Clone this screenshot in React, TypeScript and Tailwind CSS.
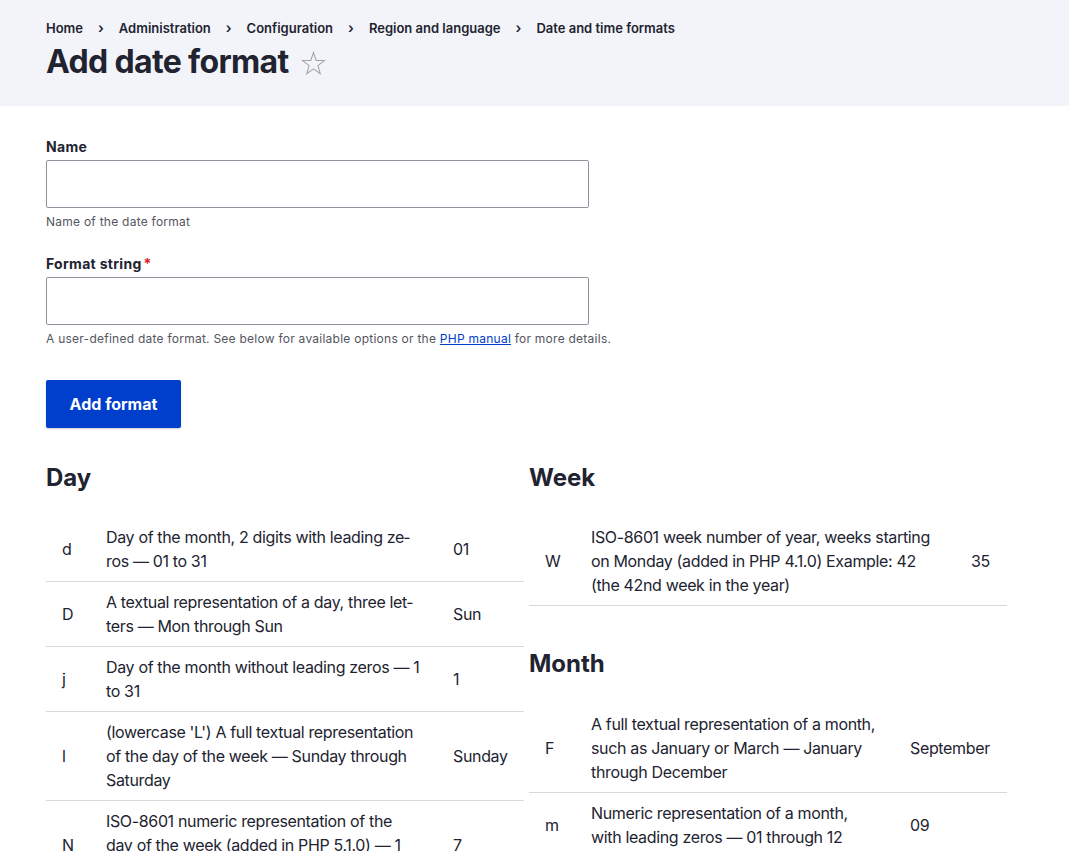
const dayRows = [
  { code: 'd', desc: 'Day of the month, 2 digits with leading ze\u00ADros \u2014 01 to 31', value: '01' },
  { code: 'D', desc: 'A textual representation of a day, three let\u00ADters \u2014 Mon through Sun', value: 'Sun' },
  { code: 'j', desc: 'Day of the month without leading zeros \u2014 1 to 31', value: '1' },
  { code: 'l', desc: "(lowercase 'L') A full textual representation of the day of the week \u2014 Sunday through Saturday", value: 'Sunday' },
  { code: 'N', desc: 'ISO-8601 numeric representation of the day of the week (added in PHP 5.1.0) \u2014 1 (for Monday) through 7 (for Sunday)', value: '7' },
  { code: 'S', desc: 'English ordinal suffix for the day of the month, 2 characters \u2014 st, nd, rd or th', value: 'st' },
];

const weekRows = [
  { code: 'W', desc: 'ISO-8601 week number of year, weeks starting on Monday (added in PHP 4.1.0) Example: 42 (the 42nd week in the year)', value: '35' },
];

const monthRows = [
  { code: 'F', desc: 'A full textual representation of a month, such as January or March \u2014 January through December', value: 'September' },
  { code: 'm', desc: 'Numeric representation of a month, with leading zeros \u2014 01 through 12', value: '09' },
  { code: 'M', desc: 'A short textual representation of a month, three letters \u2014 Jan through Dec', value: 'Sep' },
  { code: 'n', desc: 'Numeric representation of a month, without leading zeros \u2014 1 through 12', value: '9' },
];

type Row = { code: string; desc: string; value: string };

function FormatTable({ rows, cols }: { rows: Row[]; cols: [string, string, string] }) {
  return (
    <table className="w-full table-fixed border-collapse text-[16px] leading-6 tracking-[-0.35px] text-[#222330]">
      <colgroup>
        <col className={cols[0]} />
        <col className={cols[1]} />
        <col className={cols[2]} />
      </colgroup>
      <tbody>
        {rows.map((row) => (
          <tr key={row.code} className="border-b border-[#d8d9e0]">
            <td className="px-4 py-2 align-middle">{row.code}</td>
            <td className="px-4 py-2 align-middle">{row.desc}</td>
            <td className="px-4 py-2 align-middle">{row.value}</td>
          </tr>
        ))}
      </tbody>
    </table>
  );
}

function Field({ label, required, children }: { label: string; required?: boolean; children: React.ReactNode }) {
  return (
    <div>
      <div className="text-[14px] leading-[18px] font-bold tracking-[0.3px] text-[#222330]">
        {label}
        {required && <span className="text-[#dc2323] ml-[2px]">*</span>}
      </div>
      <input type="text" className="mt-1 block w-[543px] h-12 rounded-[2px] border border-[#8e929c] bg-white px-4 outline-none" />
      <div className="mt-[5px] text-[12px] leading-[18px] tracking-[0.25px] text-[#545560]">{children}</div>
    </div>
  );
}

export default function App() {
  const crumbs = ['Home', 'Administration', 'Configuration', 'Region and language', 'Date and time formats'];
  return (
    <div className="min-h-screen bg-white font-['Inter',sans-serif] text-[#222330]">
      <header className="bg-[#f3f4f9] px-[46px] pt-5 pb-6">
        <nav className="flex items-center text-[13px] leading-4 font-semibold">
          {crumbs.map((c, i) => (
            <span key={c} className="flex items-center">
              {i > 0 && <span className="px-[15px] text-[14px]">›</span>}
              {c}
            </span>
          ))}
        </nav>
        <div className="mt-[6px] flex items-center h-10">
          <h1 className="text-[32px] leading-10 font-bold tracking-[-0.65px]">Add date format</h1>
          <svg className="ml-[12px] mt-[2px]" width="25" height="25" viewBox="0 0 24 24" fill="none" stroke="#a0a1a8" strokeWidth="1" strokeLinejoin="miter">
            <polygon points="12,1.5 14.6,9 22.5,9.2 16.2,14 18.5,21.8 12,17.2 5.5,21.8 7.8,14 1.5,9.2 9.4,9" />
          </svg>
        </div>
      </header>

      <main className="px-[46px] pt-8 pb-10">
        <Field label="Name">Name of the date format</Field>
        <div className="mt-6">
          <Field label="Format string" required>
            A user-defined date format. See below for available options or the{' '}
            <a href="#" className="text-[#003ecc] underline">PHP manual</a> for more details.
          </Field>
        </div>

        <button className="mt-8 h-12 w-[135px] rounded-[2px] bg-[#003ecc] text-[16px] font-bold text-white shadow-[0_1px_2px_rgba(0,0,0,0.2)]">
          Add format
        </button>

        <div className="mt-[35px] flex gap-[5px]">
          <div className="w-[478px]">
            <h2 className="text-[24px] leading-[30px] font-bold">Day</h2>
            <div className="mt-6">
              <FormatTable rows={dayRows} cols={['w-[44px]', 'w-[347px]', 'w-[87px]']} />
            </div>
          </div>
          <div className="w-[478px]">
            <h2 className="text-[24px] leading-[30px] font-bold">Week</h2>
            <div className="mt-6">
              <FormatTable rows={weekRows} cols={['w-[46px]', 'w-[380px]', 'w-[52px]']} />
            </div>
            <h2 className="mt-[43px] text-[24px] leading-[30px] font-bold">Month</h2>
            <div className="mt-[25px]">
              <FormatTable rows={monthRows} cols={['w-[46px]', 'w-[319px]', 'w-[113px]']} />
            </div>
          </div>
        </div>
      </main>
    </div>
  );
}
